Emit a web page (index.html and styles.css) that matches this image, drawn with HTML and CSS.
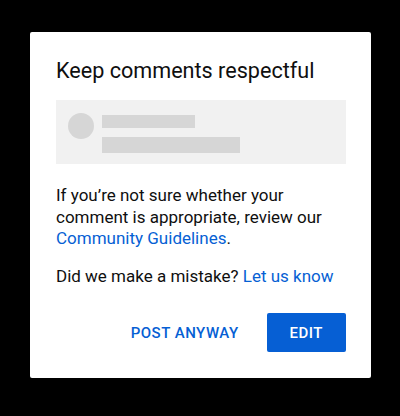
FILE: index.html
```html
<!DOCTYPE html>
<html lang="en">
<head>
    <meta charset="UTF-8">
    <meta name="viewport" content="width=device-width, initial-scale=1.0">
    <title>Keep comments respectful</title>
    <link rel="stylesheet" href="styles.css">
</head>
<body>
    <div class="dialog">
        <h2 class="title">Keep comments respectful</h2>

        <!-- 댓글 자리표시 -->
        <div class="preview">
            <div class="avatar"></div>
            <div class="lines">
                <div class="line line1"></div>
                <div class="line line2"></div>
            </div>
        </div>

        <p class="msg">
            If you’re not sure whether your comment is appropriate, review our
            <a href="#" class="link">Community Guidelines</a>.
        </p>
        <p class="msg">
            Did we make a mistake? <a href="#" class="link">Let us know</a>
        </p>

        <div class="actions">
            <button class="btn btn-text">POST ANYWAY</button>
            <button class="btn btn-fill">EDIT</button>
        </div>
    </div>
</body>
</html>
```

FILE: styles.css
```css
body {
    margin: 0;
    background: #000;
    font-family: Roboto, "Liberation Sans", Arial, sans-serif;
    color: #0f0f0f;
}

/* 대화상자 */
.dialog {
    width: 290px;
    margin: 32px 0 0 30px;
    padding: 25px 25px 26px 26px;
    background: #fff;
    border-radius: 2px;
}

.title {
    margin: 0;
    font-size: 21.6px;
    line-height: 28px;
    font-weight: 400;
}

/* 회색 박스 */
.preview {
    display: flex;
    align-items: flex-start;
    height: 64px;
    margin-top: 15px;
    padding-left: 12px;
    background: #f1f1f1;
    box-sizing: border-box;
}

.avatar {
    width: 26px;
    height: 26px;
    margin-top: 13px;
    border-radius: 50%;
    background: #d6d6d6;
}

.lines {
    display: flex;
    flex-direction: column;
    gap: 9px;
    margin: 15px 0 0 8px;
}

.line {
    background: #d6d6d6;
}

.line1 {
    width: 93px;
    height: 13px;
}

.line2 {
    width: 138px;
    height: 16px;
}

.msg {
    margin: 21px 0 0;
    font-size: 17px;
    line-height: 21.6px;
}

.msg + .msg {
    margin-top: 16px;
}

.link {
    color: #065fd4;
    text-decoration: none;
}

/* 버튼 */
.actions {
    display: flex;
    justify-content: flex-end;
    gap: 5px;
    margin-top: 26px;
}

.btn {
    height: 39px;
    padding: 0 23px;
    border: none;
    border-radius: 2px;
    font-family: inherit;
    font-size: 15px;
    font-weight: 500;
    letter-spacing: 0.5px;
    cursor: pointer;
}

.btn-text {
    background: none;
    color: #065fd4;
}

.btn-fill {
    background: #065fd4;
    color: #fff;
}
```
